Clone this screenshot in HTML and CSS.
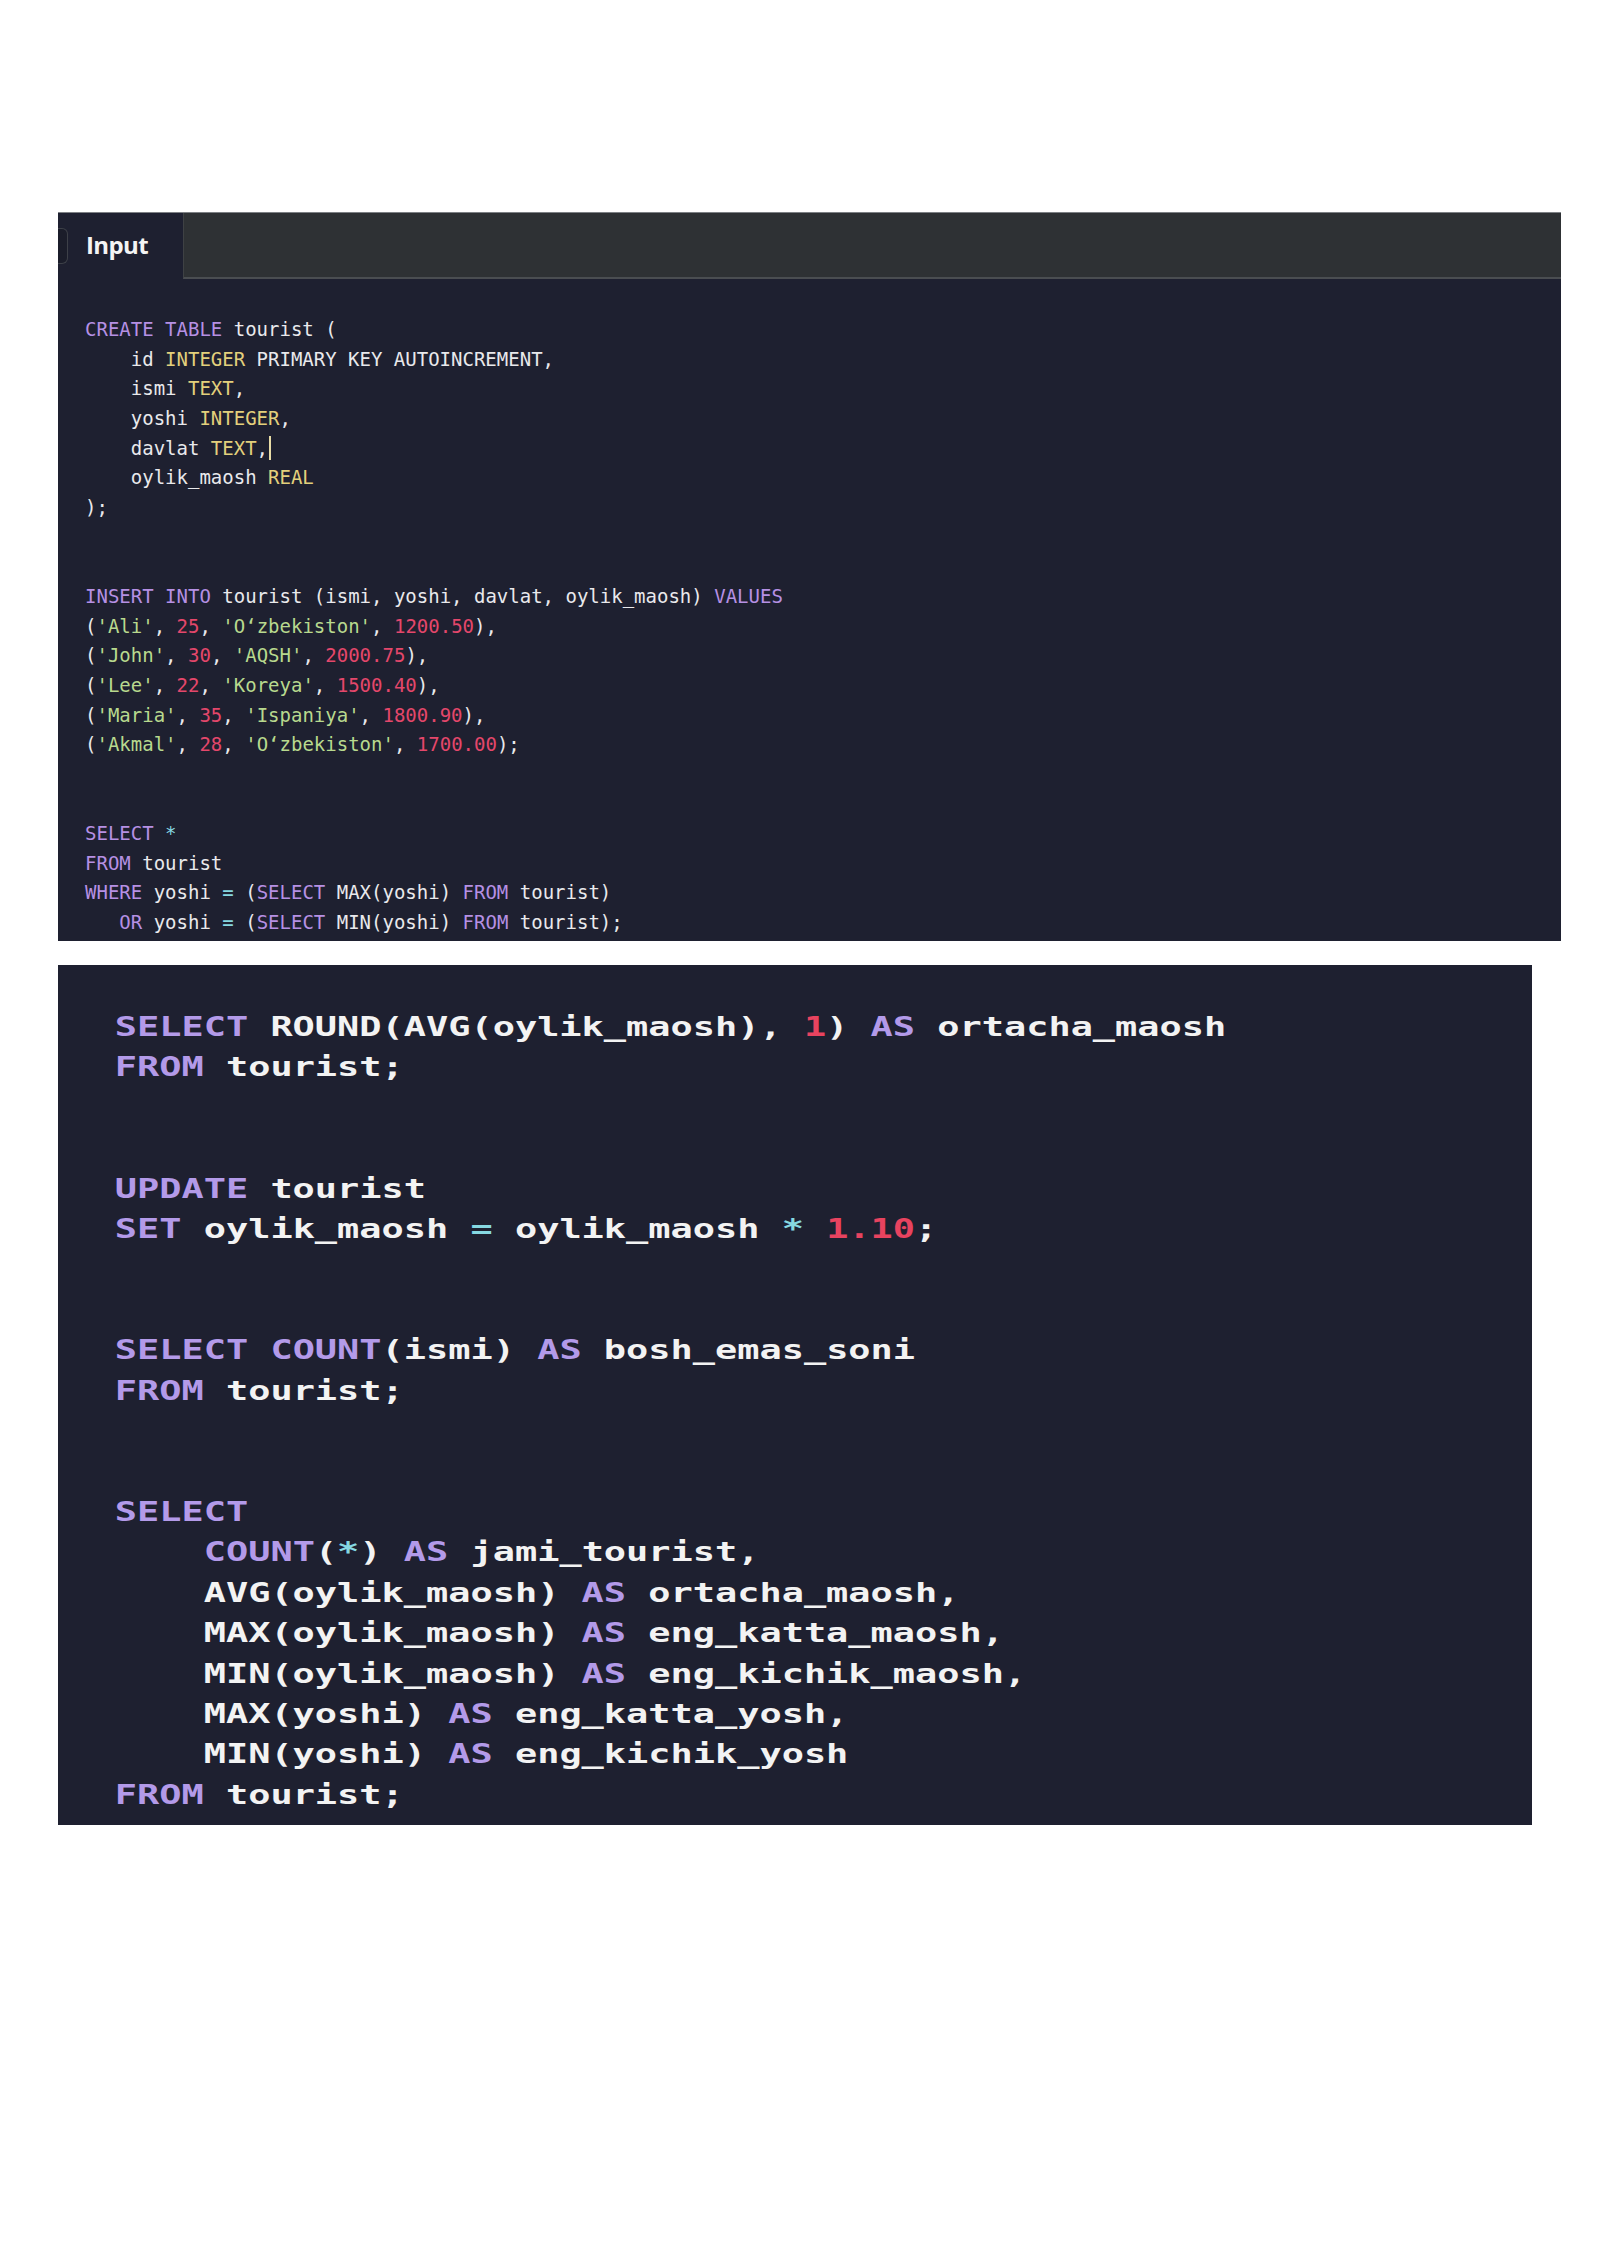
FILE: index.html
```html
<!DOCTYPE html>
<html lang="uz">
<head>
<meta charset="utf-8">
<title>SQL</title>
<link rel="stylesheet" href="styles.css">
</head>
<body>
<div class="page">
  <section class="editor">
    <div class="tabbar">
      <div class="tab">
        <span class="tab-nub"></span>
        <span class="tab-label">Input</span>
      </div>
      <div class="tab-rest"></div>
    </div>
<pre class="code code-small"><span class="k">CREATE</span> <span class="k">TABLE</span> tourist (
    id <span class="t">INTEGER</span> PRIMARY KEY AUTOINCREMENT,
    ismi <span class="t">TEXT</span>,
    yoshi <span class="t">INTEGER</span>,
    davlat <span class="t">TEXT</span>,<span class="caret"></span>
    oylik_maosh <span class="t">REAL</span>
);


<span class="k">INSERT</span> <span class="k">INTO</span> tourist (ismi, yoshi, davlat, oylik_maosh) <span class="k">VALUES</span>
(<span class="s">'Ali'</span>, <span class="n">25</span>, <span class="s">'O‘zbekiston'</span>, <span class="n">1200.50</span>),
(<span class="s">'John'</span>, <span class="n">30</span>, <span class="s">'AQSH'</span>, <span class="n">2000.75</span>),
(<span class="s">'Lee'</span>, <span class="n">22</span>, <span class="s">'Koreya'</span>, <span class="n">1500.40</span>),
(<span class="s">'Maria'</span>, <span class="n">35</span>, <span class="s">'Ispaniya'</span>, <span class="n">1800.90</span>),
(<span class="s">'Akmal'</span>, <span class="n">28</span>, <span class="s">'O‘zbekiston'</span>, <span class="n">1700.00</span>);


<span class="k">SELECT</span> <span class="o">*</span>
<span class="k">FROM</span> tourist
<span class="k">WHERE</span> yoshi <span class="o">=</span> (<span class="k">SELECT</span> MAX(yoshi) <span class="k">FROM</span> tourist)
   <span class="k">OR</span> yoshi <span class="o">=</span> (<span class="k">SELECT</span> MIN(yoshi) <span class="k">FROM</span> tourist);</pre>
  </section>

  <section class="snippet">
<pre class="code code-large"><span class="k">SELECT</span> ROUND(AVG(oylik_maosh), <span class="n">1</span>) <span class="k">AS</span> ortacha_maosh
<span class="k">FROM</span> tourist;


<span class="k">UPDATE</span> tourist
<span class="k">SET</span> oylik_maosh <span class="o">=</span> oylik_maosh <span class="o">*</span> <span class="n">1.10</span>;


<span class="k">SELECT</span> <span class="k">COUNT</span>(ismi) <span class="k">AS</span> bosh_emas_soni
<span class="k">FROM</span> tourist;


<span class="k">SELECT</span>
    <span class="k">COUNT</span>(<span class="o">*</span>) <span class="k">AS</span> jami_tourist,
    AVG(oylik_maosh) <span class="k">AS</span> ortacha_maosh,
    MAX(oylik_maosh) <span class="k">AS</span> eng_katta_maosh,
    MIN(oylik_maosh) <span class="k">AS</span> eng_kichik_maosh,
    MAX(yoshi) <span class="k">AS</span> eng_katta_yosh,
    MIN(yoshi) <span class="k">AS</span> eng_kichik_yosh
<span class="k">FROM</span> tourist;</pre>
  </section>
</div>
</body>
</html>
```
FILE: styles.css
```css
html, body {
  margin: 0;
  padding: 0;
  background: #ffffff;
}

.page {
  width: 1600px;
  height: 2262px;
  box-sizing: border-box;
  padding: 212px 0 0 58px;
  display: flex;
  flex-direction: column;
  gap: 24px;
}

.editor {
  width: 1503px;
  height: 729px;
  background: #1e2030;
  display: flex;
  flex-direction: column;
  overflow: hidden;
}

.tabbar {
  height: 67px;
  display: flex;
  flex-shrink: 0;
  border-top: 1px solid #7d8084;
  box-sizing: border-box;
}

.tab {
  width: 125px;
  display: flex;
  align-items: center;
  background: #1e2030;
}

.tab-nub {
  width: 12px;
  height: 34px;
  margin-left: -3px;
  border: 1px solid #3d4048;
  border-left: none;
  border-radius: 0 6px 6px 0;
  background: #1b1d2a;
}

.tab-label {
  margin-left: 18px;
  margin-bottom: 4px;
  font-family: "Open Sans", Inter, "DejaVu Sans", sans-serif;
  font-weight: 700;
  font-size: 24px;
  color: #f4f4f4;
  letter-spacing: -0.6px;
}

.tab-rest {
  flex: 1;
  background: #2e3134;
  border-left: 1px solid #3e4144;
  border-bottom: 2px solid #4a4d51;
}

.code {
  margin: 0;
  font-family: "DejaVu Sans Mono", "Liberation Mono", monospace;
  white-space: pre;
  color: #e9e9ec;
}

.code-small {
  font-size: 19px;
  line-height: 29.65px;
  padding: 36px 0 0 27px;
}

.snippet {
  width: 1474px;
  height: 860px;
  background: #1e2030;
  overflow: hidden;
}

.code-large {
  font-size: 26px;
  font-weight: bold;
  line-height: 40.4px;
  padding: 42px 0 0 40px;
  transform: scaleX(1.42);
  transform-origin: left top;
  color: #f3f3f3;
}

.k { color: #b690e4; }
.t { color: #e3d07c; }
.s { color: #b8d98e; }
.n { color: #e4476b; }
.o { color: #86d8e2; }

.code-large .k { color: #b39ae9; }
.code-large .n { color: #e8435f; }

.caret {
  display: inline-block;
  width: 0;
  height: 24px;
  border-left: 2px solid #e8dca6;
  vertical-align: -5px;
  margin-left: 1px;
}
```
